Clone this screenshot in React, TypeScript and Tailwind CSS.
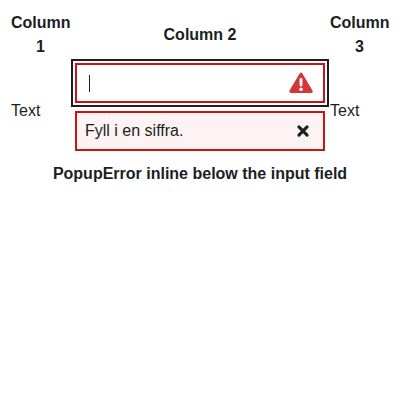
function WarningIcon() {
  return (
    <svg className="h-6 w-6" viewBox="0 0 24 24" fill="none">
      <path d="M12 3.2 22.1 20.3H1.9Z" fill="#d23838" stroke="#d23838" strokeWidth="3.2" strokeLinejoin="round" />
      <path d="M12 8.5v5.5" stroke="#fff" strokeWidth="2.9" strokeLinecap="round" />
      <circle cx="12" cy="18.3" r="1.75" fill="#fff" />
    </svg>
  );
}

function CloseIcon() {
  return (
    <svg className="h-4 w-4" viewBox="0 0 16 16" fill="none">
      <path d="m3.9 3.9 8.2 8.2M12.1 3.9l-8.2 8.2" stroke="currentColor" strokeWidth="3.1" strokeLinecap="round" />
    </svg>
  );
}

export default function App() {
  return (
    <div className="w-[400px] h-[400px] bg-white px-2 pt-2 font-['Liberation_Sans',Arial,sans-serif] text-base leading-6 text-[#1b1e23]">
      <table className="w-[384px] table-fixed border-separate border-spacing-[2px]">
        <caption className="caption-bottom text-center font-bold">PopupError inline below the input field</caption>
        <colgroup>
          <col className="w-[62px]" />
          <col />
          <col className="w-[62px]" />
        </colgroup>
        <thead>
          <tr>
            <th className="py-px pl-px pr-0.5">Column 1</th>
            <th className="p-px">Column 2</th>
            <th className="py-px pl-0.5 pr-px">Column 3</th>
          </tr>
        </thead>
        <tbody>
          <tr>
            <td className="p-px align-middle">Text</td>
            <td className="p-px">
              <div className="flex h-10 items-center justify-between border-2 border-[#c81414] bg-white pl-3 pr-2.5 outline-2 outline-offset-2 outline-[#1b1e25]">
                <span className="mt-px h-[17px] w-px bg-[#1b1e23]" />
                <WarningIcon />
              </div>
              <div className="my-2 flex h-10 items-center justify-between border-2 border-[#c81414] bg-[#fdf3f2] pl-2 pr-3">
                <span>Fyll i en siffra.</span>
                <CloseIcon />
              </div>
            </td>
            <td className="py-px pl-0.5 pr-px align-middle">Text</td>
          </tr>
        </tbody>
      </table>
    </div>
  );
}
